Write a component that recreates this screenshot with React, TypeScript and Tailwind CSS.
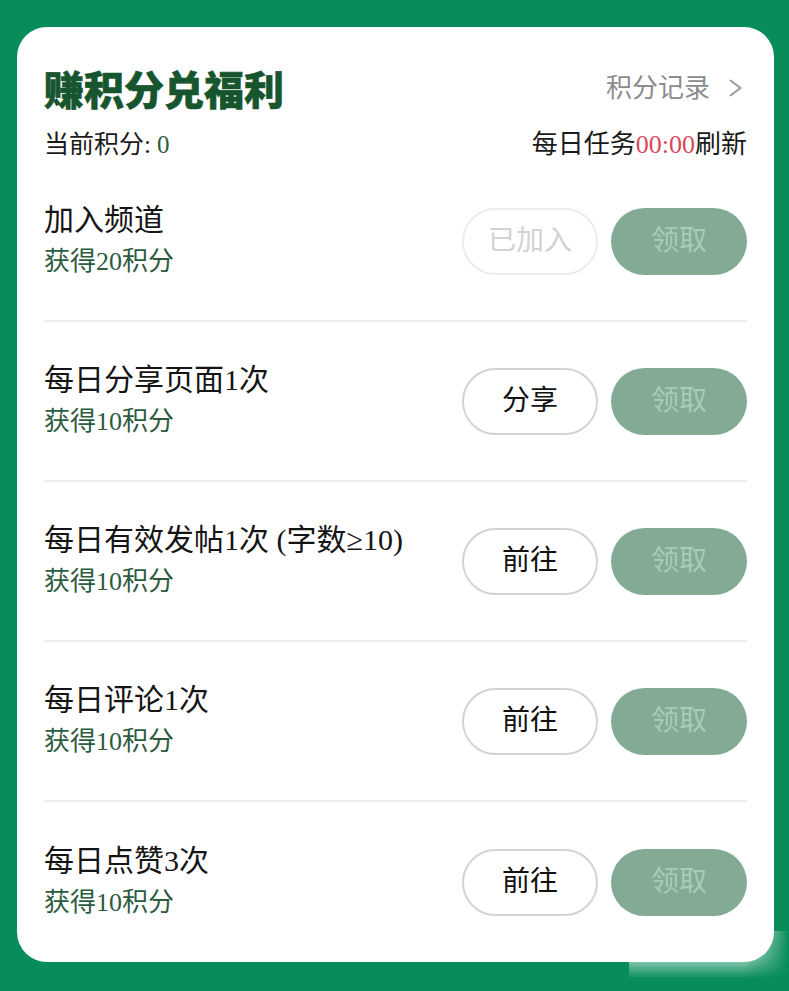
type Task = {
  title: string
  points: number
  action: string
  done?: boolean
}

const tasks: Task[] = [
  { title: '加入频道', points: 20, action: '已加入', done: true },
  { title: '每日分享页面1次', points: 10, action: '分享' },
  { title: '每日有效发帖1次 (字数≥10)', points: 10, action: '前往' },
  { title: '每日评论1次', points: 10, action: '前往' },
  { title: '每日点赞3次', points: 10, action: '前往' },
]

function TaskRow({ task, last }: { task: Task; last: boolean }) {
  return (
    <div
      className={
        'flex h-[160px] items-center justify-between ' +
        (last ? '' : 'border-b-2 border-[#ececec]')
      }
    >
      <div className="flex flex-col gap-[2px]">
        <div className="text-[30px] leading-[40px] text-[#151515]">{task.title}</div>
        <div className="text-[26px] leading-[40px] text-[#2c5b3e]">获得{task.points}积分</div>
      </div>
      <div className="flex items-center gap-[13px]">
        <button
          className={
            'h-[67px] w-[136px] rounded-full border-2 bg-white text-[28px] ' +
            (task.done ? 'border-[#ececec] text-[#d2d2d2]' : 'border-[#d3d3d3] text-[#111]')
          }
        >
          {task.action}
        </button>
        <button className="h-[67px] w-[136px] rounded-full bg-[#83aa95] text-[28px] text-[#a9cbb8]">
          领取
        </button>
      </div>
    </div>
  )
}

export default function App() {
  return (
    <div className="relative min-h-[991px] w-full overflow-hidden bg-[#078c5a] pt-[27px] font-['Liberation_Serif','Noto_Sans_CJK_SC',serif]">
      <div className="ml-[17px] w-[757px] rounded-[30px] bg-white px-[27px] pt-[41px]">
        <div className="flex h-[40px] items-center justify-between">
          <h1 className="font-['Noto_Sans_CJK_SC',sans-serif] text-[40px] font-black leading-[40px] text-[#17552f] [-webkit-text-stroke:0.6px_#17552f]">
            赚积分兑福利
          </h1>
          <div className="flex items-center gap-[19px] pr-[5px] text-[26px] text-[#8c8c8c]">
            <span>积分记录</span>
            <svg width="13" height="18" viewBox="0 0 13 18" fill="none" stroke="#9a9a9a" strokeWidth="2" strokeLinecap="round" strokeLinejoin="round">
              <polyline points="1.5,1.5 11.5,9 1.5,16.5" />
            </svg>
          </div>
        </div>
        <div className="mt-[22px] flex h-[30px] items-center justify-between text-[25px] leading-[30px] text-[#1a1a1a]">
          <span>
            当前积分:<span className="ml-[6px] text-[#2c5b3e]">0</span>
          </span>
          <span className="text-[26px]">
            每日任务<span className="text-[#d9485c]">00:00</span>刷新
          </span>
        </div>
        <div className="mt-[2px]">
          {tasks.map((t, i) => (
            <TaskRow key={t.title} task={t} last={i === tasks.length - 1} />
          ))}
        </div>
      </div>
      <div className="pointer-events-none absolute left-[629px] top-[931px] h-[48px] w-[160px] bg-gradient-to-b from-white via-white/60 via-55% to-transparent [mask-image:linear-gradient(to_right,black_72%,transparent)]" />
    </div>
  )
}
